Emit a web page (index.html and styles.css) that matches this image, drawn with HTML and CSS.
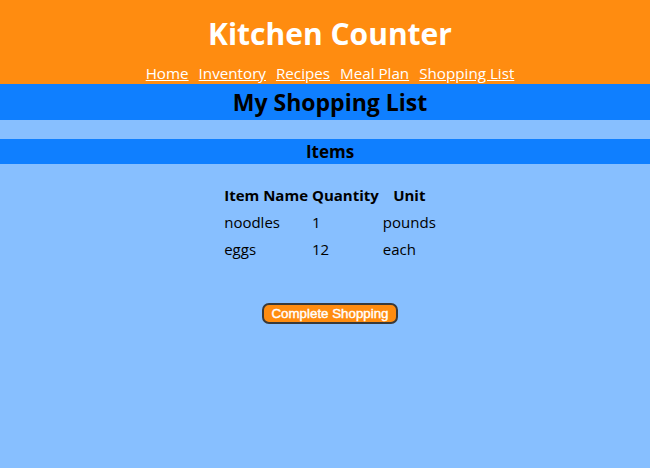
FILE: index.html
```html
<!DOCTYPE html>
<html>
<head>
<meta charset="utf-8">
<link rel="stylesheet" href="styles.css">
</head>
<body>
<header class="site-header">
  <h1 class="site-title">Kitchen Counter</h1>
  <nav class="site-nav">
    <a href="#">Home</a>
    <a href="#">Inventory</a>
    <a href="#">Recipes</a>
    <a href="#">Meal Plan</a>
    <a href="#">Shopping List</a>
  </nav>
</header>
<h2 class="page-title">My Shopping List</h2>
<section class="items">
  <h3 class="section-title">Items</h3>
  <table class="items-table">
    <thead>
      <tr><th>Item Name</th><th>Quantity</th><th>Unit</th></tr>
    </thead>
    <tbody>
      <tr><td>noodles</td><td>1</td><td>pounds</td></tr>
      <tr><td>eggs</td><td>12</td><td>each</td></tr>
    </tbody>
  </table>
  <div class="actions">
    <button class="complete-btn">Complete Shopping</button>
  </div>
</section>
</body>
</html>
```
FILE: styles.css
```css
html, body {
  margin: 0;
  padding: 0;
  height: 100%;
}
body {
  background: #87bfff;
  font-family: "Open Sans", "Noto Sans", sans-serif;
  color: #000;
}
.site-header {
  background: #ff8c10;
  display: flex;
  flex-direction: column;
  align-items: center;
  padding: 14px 0 0 10px;
  height: 84px;
  box-sizing: border-box;
}
.site-title {
  margin: 0;
  color: #fff;
  font-size: 30px;
  font-weight: 700;
  line-height: 40px;
}
.site-nav {
  display: flex;
  gap: 10px;
  font-size: 15.2px;
  line-height: 20px;
  margin-top: 9px;
}
.site-nav a {
  color: #fff;
}
.page-title {
  margin: 0;
  padding-left: 10px;
  background: #0f7fff;
  text-align: center;
  font-size: 23px;
  line-height: 36px;
  font-weight: 700;
}
.items {
  margin-top: 19px;
  padding-left: 10px;
}
.section-title {
  margin: 0 0 0 -10px;
  padding: 1px 0 0 10px;
  background: #0f7fff;
  text-align: center;
  font-size: 17px;
  line-height: 24px;
  font-weight: 700;
}
.items-table {
  margin: 17px auto 0;
  border-collapse: separate;
  border-spacing: 2px;
  font-size: 15px;
}
.items-table th {
  font-weight: 700;
  padding: 1px;
  line-height: 23px;
}
.items-table td {
  text-align: left;
  padding: 1px;
  line-height: 23px;
}
.actions {
  display: flex;
  justify-content: center;
  margin-top: 39px;
}
.complete-btn {
  font-family: "Liberation Sans", Arial, sans-serif;
  font-weight: 400;
  font-size: 13.33px;
  line-height: 15px;
  color: #fff;
  -webkit-text-stroke: 0.4px #fff;
  background: #ff8c10;
  border: 2px solid #3a3a3a;
  border-radius: 7px;
  padding: 1px 7px;
}
```
